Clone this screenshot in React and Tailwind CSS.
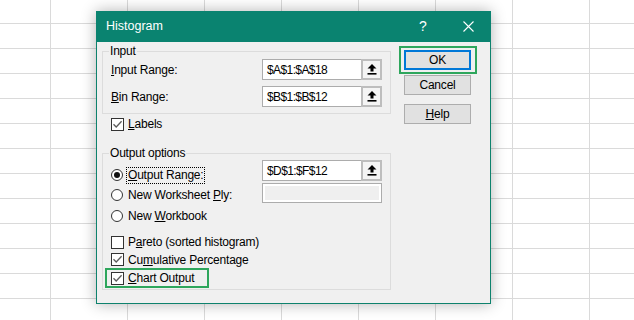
import React from 'react';

const font = "font-['Liberation_Sans',Arial,sans-serif]";

const UpArrow = () => (
  <svg width="10" height="11" viewBox="0 0 10 11">
    <path d="M5 0 L9.5 4.5 H6.5 V7.5 H3.5 V4.5 H0.5 Z" fill="#000" />
    <rect x="0.5" y="9" width="9" height="1.6" fill="#000" />
  </svg>
);

const RangeField = ({ value, tall }) => (
  <div className={`flex w-[120px] border border-[#acacac] bg-white ${tall ? 'h-[21px]' : 'h-[20px]'}`}>
    <div className="flex flex-1 items-center pl-[4px] text-[12px] tracking-[-0.6px] text-black">{value}</div>
    <div className="flex w-[21px] items-center justify-center border-2 border-[#bdbdbd] bg-[#f4f4f4] -my-px -mr-px">
      <UpArrow />
    </div>
  </div>
);

const CheckBox = ({ checked }) => (
  <span className="flex h-[13px] w-[13px] shrink-0 items-center justify-center border border-[#333] bg-white">
    {checked && (
      <svg width="11" height="11" viewBox="0 0 11 11">
        <path d="M1.5 5.2 L4.2 8 L9.6 2.3" fill="none" stroke="#5c5c5c" strokeWidth="1.3" />
      </svg>
    )}
  </span>
);

const Radio = ({ checked }) => (
  <span className="flex h-[12px] w-[12px] shrink-0 items-center justify-center rounded-full border border-[#333] bg-white">
    {checked && <span className="h-[6px] w-[6px] rounded-full bg-[#111]" />}
  </span>
);

const SheetGrid = () => {
  const cells = Array.from({ length: 13 * 9 }, (_, i) => i);
  return (
    <div className="grid grid-cols-[51px_repeat(8,77px)] grid-rows-[24px_repeat(12,25px)]">
      {cells.map(i => (
        <div key={i} className="border-r border-b border-[#dadada]" />
      ))}
    </div>
  );
};

const DialogButton = ({ children }) => (
  <button className="flex h-[20px] w-[67px] items-center justify-center border border-[#adadad] bg-[#e1e1e1] text-[12px] text-black">
    {children}
  </button>
);

const App = () => {
  return (
    <div className={`relative h-[320px] w-[634px] overflow-hidden bg-white ${font}`}>
      <SheetGrid />

      {/* Histogram dialog */}
      <div className="absolute left-[96px] top-[11px] flex h-[293px] w-[395px] flex-col border border-[#0d826d] bg-[#f0f0f0] shadow-[0_0_14px_rgba(0,0,0,0.3)]">
        <div className="-mx-px -mt-px flex h-[31px] shrink-0 items-center bg-[#0a8370] pl-[10px] text-white">
          <span className="text-[12.5px]">Histogram</span>
          <span className="ml-auto flex w-[44px] justify-center text-[14px]">?</span>
          <span className="flex w-[46px] justify-center">
            <svg width="11" height="11" viewBox="0 0 11 11">
              <path d="M0.5 0.5 L10.5 10.5 M10.5 0.5 L0.5 10.5" stroke="#fff" strokeWidth="1.1" />
            </svg>
          </span>
        </div>

        <div className="flex flex-1 text-[12px] tracking-[-0.2px] text-black">
          {/* left column */}
          <div className="ml-[5px] w-[289px] pt-[2px]">
            <fieldset className="border border-[#dcdcdc] pl-[8px] pr-[8px] pt-[1px] pb-[6px]">
              <legend className="-ml-[2px] px-[1px] leading-[14px]">Input</legend>
              <div className="flex h-[21px] items-center">
                <span><span className="underline">I</span>nput Range:</span>
                <div className="ml-auto"><RangeField value="$A$1:$A$18" tall /></div>
              </div>
              <div className="mt-[6px] flex h-[21px] items-center">
                <span><span className="underline">B</span>in Range:</span>
                <div className="ml-auto"><RangeField value="$B$1:$B$12" tall /></div>
              </div>
            </fieldset>

            <div className="mt-[3px] flex h-[14px] items-center gap-[4px] pl-[9px]">
              <CheckBox checked />
              <span><span className="underline">L</span>abels</span>
            </div>

            <fieldset className="mt-[15px] border border-[#dcdcdc] pl-[8px] pr-[8px] pb-[1px]">
              <legend className="-ml-[2px] px-[1px] leading-[14px]">Output options</legend>
              <div className="flex items-start">
                <div className="flex flex-col pt-[5px]">
                  <div className="flex h-[20px] items-center gap-[3px]">
                    <Radio checked />
                    <span className="border border-dotted border-black px-[1px] leading-[15px]">
                      <span className="underline">O</span>utput Range:
                    </span>
                  </div>
                  <div className="flex h-[20px] items-center gap-[3px]">
                    <Radio />
                    <span className="border border-transparent px-[1px]">
                      New Worksheet <span className="underline">P</span>ly:
                    </span>
                  </div>
                  <div className="flex h-[21px] items-center gap-[3px]">
                    <Radio />
                    <span className="border border-transparent px-[1px]">
                      New <span className="underline">W</span>orkbook
                    </span>
                  </div>
                </div>
                <div className="ml-auto flex flex-col">
                  <RangeField value="$D$1:$F$12" tall />
                  <div className="mt-[2px] h-[20px] w-[120px] border border-[#acacac] bg-white p-[2px]">
                    <div className="h-full w-full bg-[#efefef]" />
                  </div>
                </div>
              </div>

              <div className="mt-[7px] flex h-[18px] items-center gap-[4px]">
                <CheckBox />
                <span>P<span className="underline">a</span>reto (sorted histogram)</span>
              </div>
              <div className="flex h-[17px] items-center gap-[4px]">
                <CheckBox checked />
                <span>Cu<span className="underline">m</span>ulative Percentage</span>
              </div>
              <div className="-ml-[6px] flex h-[20px] w-[104px] items-center gap-[4px] border-2 border-[#2ea65c] pl-[4px]">
                <CheckBox checked />
                <span><span className="underline">C</span>hart Output</span>
              </div>
            </fieldset>
          </div>

          {/* right column: buttons */}
          <div className="ml-[8px] flex flex-col pt-[4px]">
            <div className="h-[28px] w-[78px] border-2 border-[#2ea65c] pl-[3px] pt-[2px]">
              <button className="flex h-[20px] w-[67px] items-center justify-center border-2 border-[#0078d7] bg-[#e1e1e1] text-[12px] text-black">
                OK
              </button>
            </div>
            <div className="ml-[5px] mt-[1px]">
              <DialogButton>Cancel</DialogButton>
            </div>
            <div className="ml-[5px] mt-[9px]">
              <DialogButton><span className="underline">H</span>elp</DialogButton>
            </div>
          </div>
        </div>
      </div>
    </div>
  );
};

export default App;
